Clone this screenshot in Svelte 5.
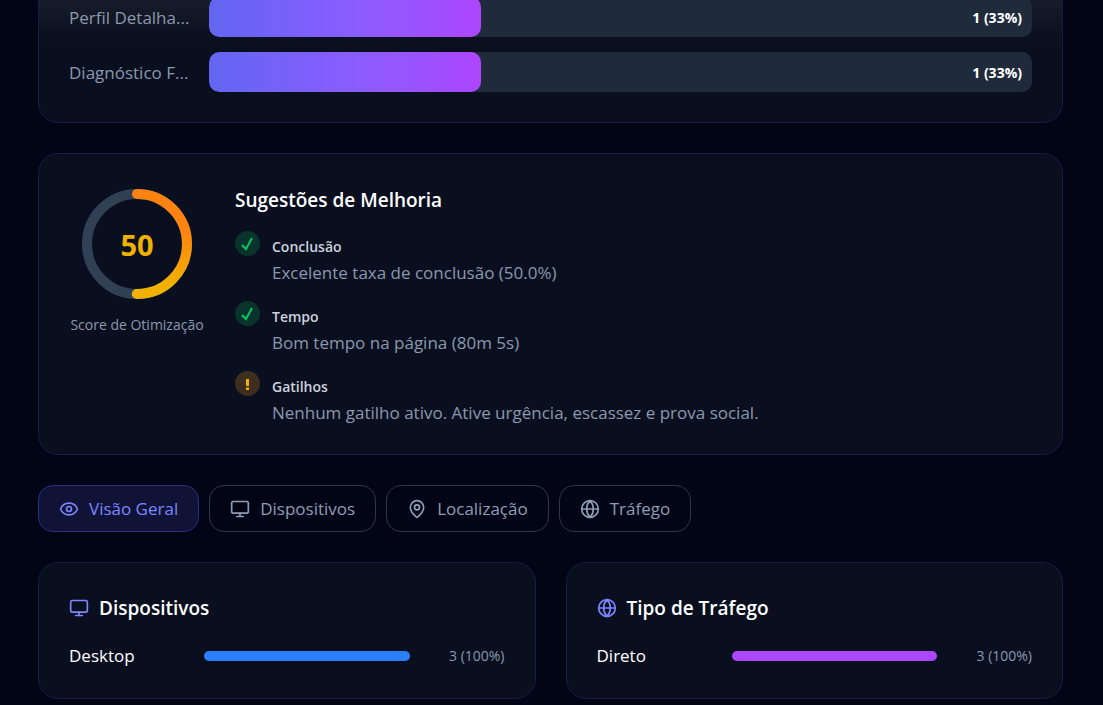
<script lang="ts">
  const funnel = [
    { label: "Perfil Detalha...", count: 1, pct: 33 },
    { label: "Diagnóstico F...", count: 1, pct: 33 },
  ];

  const score = 50;
  const radius = 50;
  const circumference = 2 * Math.PI * radius;

  const tips = [
    { kind: "ok", title: "Conclusão", text: "Excelente taxa de conclusão (50.0%)" },
    { kind: "ok", title: "Tempo", text: "Bom tempo na página (80m 5s)" },
    {
      kind: "warn",
      title: "Gatilhos",
      text: "Nenhum gatilho ativo. Ative urgência, escassez e prova social.",
    },
  ];

  const tabs = [
    { id: "overview", label: "Visão Geral", icon: "eye" },
    { id: "devices", label: "Dispositivos", icon: "monitor" },
    { id: "location", label: "Localização", icon: "pin" },
    { id: "traffic", label: "Tráfego", icon: "globe" },
  ];

  const panels = [
    { title: "Dispositivos", icon: "monitor", tone: "blue", rows: [{ label: "Desktop", count: 3, pct: 100 }] },
    { title: "Tipo de Tráfego", icon: "globe", tone: "purple", rows: [{ label: "Direto", count: 3, pct: 100 }] },
  ];

  let active = $state("overview");
  let dashOffset = $derived(circumference * (1 - score / 100));
</script>

{#snippet icon(name: string)}
  <svg class="icon" viewBox="0 0 24 24" aria-hidden="true">
    {#if name === "eye"}
      <path d="M2 12.3a1 1 0 0 1 0-.6 10.8 10.8 0 0 1 20 0 1 1 0 0 1 0 .6 10.8 10.8 0 0 1-20 0" />
      <circle cx="12" cy="12" r="3" />
    {:else if name === "monitor"}
      <rect x="2" y="3" width="20" height="14" rx="2" />
      <path d="M8 21h8M12 17v4" />
    {:else if name === "pin"}
      <path d="M20 10c0 5-5.5 10.2-7.4 11.8a1 1 0 0 1-1.2 0C9.5 20.2 4 15 4 10a8 8 0 0 1 16 0" />
      <circle cx="12" cy="10" r="3" />
    {:else}
      <circle cx="12" cy="12" r="10" />
      <path d="M12 2a14.5 14.5 0 0 0 0 20 14.5 14.5 0 0 0 0-20M2 12h20" />
    {/if}
  </svg>
{/snippet}

<main class="page">
  <section class="card funnel">
    {#each funnel as step}
      <div class="step">
        <span class="step-label">{step.label}</span>
        <div class="step-track">
          <div class="step-fill" style="width: {step.pct}%"></div>
          <span class="step-value">{step.count} ({step.pct}%)</span>
        </div>
      </div>
    {/each}
  </section>

  <section class="card score-card">
    <div class="score">
      <div class="ring">
        <svg viewBox="0 0 120 120" aria-hidden="true">
          <defs>
            <linearGradient id="score-gradient" x1="0" y1="0" x2="1" y2="0">
              <stop offset="10%" stop-color="#f0b100" />
              <stop offset="65%" stop-color="#ff8311" />
            </linearGradient>
          </defs>
          <g transform="rotate(-90 60 60)">
            <circle class="ring-track" cx="60" cy="60" r={radius} />
            <circle
              class="ring-value"
              cx="60"
              cy="60"
              r={radius}
              stroke-dasharray={circumference}
              stroke-dashoffset={dashOffset}
            />
          </g>
        </svg>
        <span class="ring-number">{score}</span>
      </div>
      <span class="score-label">Score de Otimização</span>
    </div>

    <div class="tips">
      <h3>Sugestões de Melhoria</h3>
      <ul>
        {#each tips as tip}
          <li>
            <span class="badge {tip.kind}" aria-hidden="true">
              <svg viewBox="0 0 25 25">
                {#if tip.kind === "ok"}
                  <path d="M7 14l4 4 6-11" />
                {:else}
                  <path d="M12.5 8v7M12.5 16.5v2.5" />
                {/if}
              </svg>
            </span>
            <div class="tip-body">
              <strong>{tip.title}</strong>
              <p>{tip.text}</p>
            </div>
          </li>
        {/each}
      </ul>
    </div>
  </section>

  <nav class="tabs">
    {#each tabs as tab}
      <button type="button" class="tab" class:active={active === tab.id} onclick={() => (active = tab.id)}>
        {@render icon(tab.icon)}
        {tab.label}
      </button>
    {/each}
  </nav>

  <div class="panels">
    {#each panels as panel}
      <section class="card">
        <h4>{@render icon(panel.icon)}{panel.title}</h4>
        {#each panel.rows as row}
          <div class="row">
            <span class="row-label">{row.label}</span>
            <div class="row-track">
              <div class="row-fill {panel.tone}" style="width: {row.pct}%"></div>
            </div>
            <span class="row-value">{row.count} ({row.pct}%)</span>
          </div>
        {/each}
      </section>
    {/each}
  </div>
</main>

<style>
  :global(body) {
    background: #020516;
  }

  .page {
    display: flex;
    flex-direction: column;
    gap: 30px;
    padding: 0 40px 6px 38px;
    overflow: hidden;
    font-family: "Segoe UI", "Open Sans", "Noto Sans", sans-serif;
    font-size: 17px;
    color: #fff;
  }

  .card {
    padding: 30px;
    border: 1px solid #191b40;
    border-radius: 20px;
    background: #0a0f20;
  }

  h3,
  h4,
  p,
  ul {
    margin: 0;
    padding: 0;
  }

  .funnel {
    display: flex;
    flex-direction: column;
    gap: 15px;
    margin-top: -34px;
    background: linear-gradient(#171c2a 34px, #0c1121 66px, #0a0f20 84px);
  }

  .step {
    display: flex;
    align-items: center;
    gap: 15px;
  }

  .step-label {
    width: 125px;
    white-space: nowrap;
    color: #8b98ad;
  }

  .step-track {
    flex: 1;
    display: flex;
    align-items: center;
    justify-content: space-between;
    height: 40px;
    border-radius: 10px;
    background: #1f2a3a;
    overflow: hidden;
  }

  .step-fill {
    height: 100%;
    border-radius: 10px;
    background: linear-gradient(90deg, #6366f1, #8b5cff 55%, #ad46ff);
  }

  .step-value {
    padding-right: 10px;
    font-size: 14px;
    font-weight: 700;
  }

  .score-card {
    display: flex;
    gap: 30px;
  }

  .score {
    display: flex;
    flex-direction: column;
    align-items: center;
    gap: 10px;
    width: 136px;
  }

  .ring {
    display: grid;
    place-items: center;
    width: 120px;
    height: 120px;
  }

  .ring > * {
    grid-area: 1 / 1;
  }

  .ring-track,
  .ring-value {
    fill: none;
    stroke: #314155;
    stroke-width: 10;
  }

  .ring-value {
    stroke: url(#score-gradient);
    stroke-linecap: round;
  }

  .ring-number {
    font-size: 29px;
    font-weight: 700;
    color: #f0b100;
  }

  .score-label {
    font-size: 14px;
    line-height: 21px;
    white-space: nowrap;
    color: #8b98ad;
  }

  .tips {
    flex: 1;
  }

  h3 {
    margin-bottom: 15px;
    font-size: 19px;
    font-weight: 600;
    line-height: 32px;
  }

  ul {
    display: flex;
    flex-direction: column;
    gap: 17px;
    list-style: none;
  }

  li {
    display: flex;
    gap: 12px;
  }

  .badge {
    flex: none;
    width: 25px;
    height: 25px;
    border-radius: 50%;
  }

  .badge svg {
    display: block;
    fill: none;
    stroke: currentColor;
    stroke-width: 2;
  }

  .badge.ok {
    color: #05c566;
    background: #09342c;
  }

  .badge.warn {
    color: #f0b100;
    background: #3d2e20;
  }

  .badge.warn svg {
    stroke-width: 3;
  }

  .tip-body strong {
    display: block;
    font-size: 14px;
    font-weight: 600;
    line-height: 31px;
    color: #ccd1dc;
  }

  .tip-body p {
    line-height: 22px;
    color: #8b98ad;
  }

  .tabs {
    display: flex;
    gap: 10px;
  }

  .tab {
    display: flex;
    align-items: center;
    gap: 10px;
    padding: 10px 20px;
    border: 1px solid #2a3848;
    border-radius: 15px;
    background: transparent;
    font: inherit;
    font-weight: 500;
    line-height: 25px;
    color: #8f9db3;
    cursor: pointer;
  }

  .tab.active {
    border-color: #2c2f7c;
    background: #101336;
    color: #7c86ff;
  }

  .icon {
    width: 20px;
    height: 20px;
    flex: none;
    fill: none;
    stroke: currentColor;
    stroke-width: 2;
    stroke-linecap: round;
    stroke-linejoin: round;
  }

  .panels {
    display: grid;
    grid-template-columns: 1fr 1fr;
    gap: 30px;
  }

  h4 {
    display: flex;
    align-items: center;
    gap: 10px;
    margin-bottom: 20px;
    font-size: 19px;
    font-weight: 600;
    line-height: 30px;
  }

  h4 .icon {
    color: #7c86ff;
  }

  .row {
    display: flex;
    align-items: center;
    gap: 15px;
    line-height: 25px;
  }

  .row-label {
    width: 120px;
  }

  .row-track {
    flex: 1;
    height: 10px;
  }

  .row-fill {
    height: 100%;
    border-radius: 5px;
  }

  .row-fill.blue {
    background: #2b7fff;
  }

  .row-fill.purple {
    background: #ad46ff;
  }

  .row-value {
    width: 80px;
    font-size: 14px;
    text-align: right;
    color: #8b98ad;
  }
</style>
